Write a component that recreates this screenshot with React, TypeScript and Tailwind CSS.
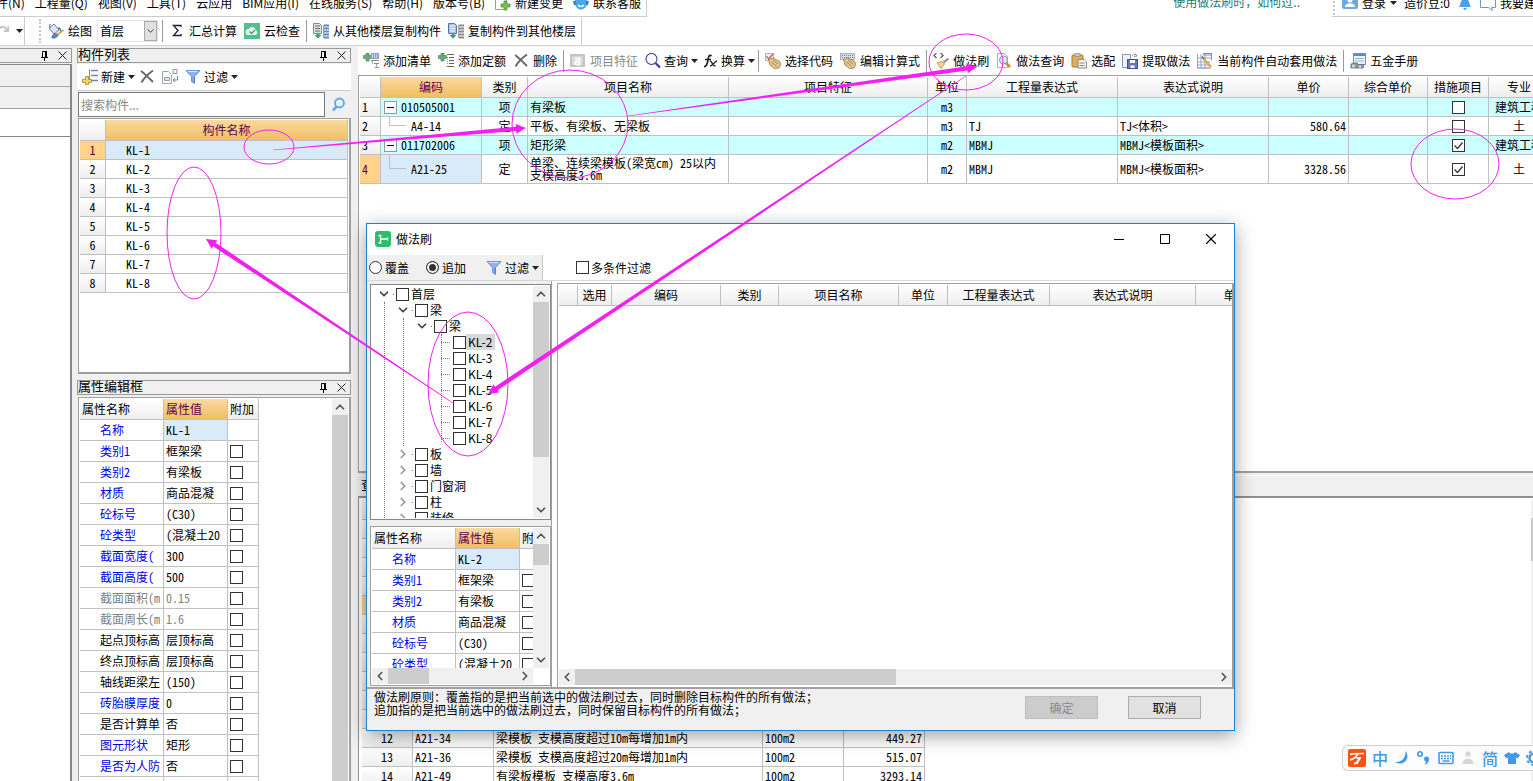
import { useState } from "react";
import type { ReactNode } from "react";
import { ChevronDown, ChevronLeft, ChevronRight, ChevronUp, X } from "lucide-react";
import clsx from "clsx";

const headBg = "bg-linear-to-b from-white to-[#eeeeee]";
const goldBg = "bg-linear-to-b from-[#fbd9a0] to-[#f0bf60] text-[#600050]";
const cell = "border-r border-b border-[#c0c0c0] p-0 font-normal overflow-hidden whitespace-nowrap";

/* ---------- icons ---------- */

function Svg({ children }: { children: ReactNode }) {
    return (
        <svg width="16" height="16" viewBox="0 0 16 16" fill="none" className="shrink-0" aria-hidden="true">
            {children}
        </svg>
    );
}

const AddListIcon = () => (
    <Svg>
        <path d="M3 0h3v2.500h2.500v3H6V8H3V5.500H.5v-3H3z" fill="#6fa67a" stroke="#3f7d51" strokeWidth=".6" />
        <rect x="8" y="0" width="8" height="6" fill="#8fa3c4" />
        <path d="M9 2h6M9 4h6" stroke="#fff" strokeDasharray="1 1" />
        <path d="M8 7.500h8M11 10.500h5M12 14.500h4" stroke="#8a8a8a" />
        <path d="M9.500 8v3M13.500 11v4" stroke="#aaa" />
    </Svg>
);

const AddQuotaIcon = () => (
    <Svg>
        <path d="M3 0h3v2.500h2.500v3H6V8H3V5.500H.5v-3H3z" fill="#6fa67a" stroke="#3f7d51" strokeWidth=".6" />
        <path d="M9 1.500h7M11 4.500h5M11 7.500h5M11 10.500h5M9 13.500h7" stroke="#666" />
        <path d="M9.500 4v7" stroke="#999" strokeDasharray="1 1" />
    </Svg>
);

const CrossIcon = () => (
    <Svg>
        <path d="M2 2c4 3 8 7 12 11M14 1.500C9 5 5 9 2.500 13.500" stroke="#666" strokeWidth="1.900" />
    </Svg>
);

const FeatureIcon = () => (
    <Svg>
        <rect x="0" y="1" width="15" height="13" fill="#c4c4c4" />
        <rect x="2" y="3" width="11" height="9" fill="#d8d8d8" />
        <path d="M5 5.500h4.500v6H6.500a1.500 1.500 0 010-3h3" stroke="#fff" strokeWidth="1.800" />
    </Svg>
);

const FindIcon = () => (
    <Svg>
        <circle cx="6.500" cy="6" r="5.500" stroke="#3a3f8f" strokeWidth="1.100" fill="#fafaff" />
        <path d="M10.500 10l4.500 4.500" stroke="#3a3f8f" strokeWidth="2.200" />
    </Svg>
);

const FxIcon = () => (
    <Svg>
        <path d="M9.500 3C7 1 6.500 4 6 7s-1.500 7-4 6.500M3 6.500h6" stroke="#222" strokeWidth="1.700" />
        <path d="M8 8c2.500 0 2 5 5.500 5M15 8c-2.500 0-4 5-7 5" stroke="#222" strokeWidth="1.400" />
    </Svg>
);

const Hand = () => (
    <g>
        <path d="M3.500 6.500l4-1.500 6.500 3 2 3-2 4-4.500.5L5 12z" fill="#e3c58c" stroke="#927345" strokeWidth=".8" />
        <path d="M8 7l5 4M6.500 9l5 4" stroke="#927345" strokeWidth=".7" />
    </g>
);

const PickCodeIcon = () => (
    <Svg>
        <rect x=".5" y=".5" width="8" height="7" fill="#f3f3f3" stroke="#b5b5b5" />
        <Hand />
        <path d="M1.500 3l2 3L8 1" stroke="#e05540" strokeWidth="1.300" />
    </Svg>
);

const EditExprIcon = () => (
    <Svg>
        <rect x=".5" y=".5" width="14" height="6" fill="#d8dce2" stroke="#8e98a6" strokeWidth=".7" />
        <path d="M2 2.500h12M2 4.500h12" stroke="#7c8694" strokeDasharray="1 1" />
        <Hand />
    </Svg>
);

const BrushIcon = () => (
    <Svg>
        <path d="M3.500 0L.8 2.500l2.700 2.500M7.500 0l2.700 2.500L7.500 5" stroke="#555" strokeWidth="1.100" />
        <path d="M15.500 5.500l-5 4" stroke="#8f8474" strokeWidth="1.800" />
        <path d="M4 9.500l5-1 2.500 2.500L8 15.500z" fill="#ecd79c" stroke="#ab8f53" strokeWidth=".8" />
    </Svg>
);

const QueryIcon = () => (
    <Svg>
        <path d="M1.500.5h7l3 3v11h-10z" fill="#fff" stroke="#a8b2c0" />
        <circle cx="7.500" cy="7" r="4" fill="#d9eaf7" stroke="#8a95a5" />
        <path d="M10 10l4 4" stroke="#d28a3c" strokeWidth="2.600" />
    </Svg>
);

const ClipboardIcon = () => (
    <Svg>
        <rect x="1" y="2" width="11" height="12" rx="1" fill="#e3ae55" stroke="#aa7927" />
        <rect x="4" y=".5" width="5" height="3" fill="#c9c9c9" stroke="#888" strokeWidth=".6" />
        <path d="M7 6.500h6l2.500 2.500v6H7z" fill="#f4f4f4" stroke="#888" />
        <path d="M8.500 10h5M8.500 12.500h5" stroke="#888" />
    </Svg>
);

const ExtractIcon = () => (
    <Svg>
        <path d="M.5 1.500h8v13h-8z" fill="#eef3fa" stroke="#8497b5" />
        <rect x="5.500" y="6.500" width="10" height="9" fill="#6c74b8" stroke="#474f93" />
        <path d="M8 7h5v3H8zM8.500 12.500h4V15h-4z" fill="#fff" />
        <path d="M10 3c1-2 4-2 5 0M13 .5l2 2.500-3 .5" stroke="#8a8a8a" />
    </Svg>
);

const AutoApplyIcon = () => (
    <Svg>
        <path d="M.5 1v14H12M.5 15H14M4 1v14M8 1v14M1 5h14M1 9h12M1 12h12" stroke="#97a0c6" />
        <path d="M6 .5h9M6 2h9M14.500 1v6" stroke="#7f8ac0" />
        <path d="M6 5l8 9" stroke="#dca94d" strokeWidth="2.600" />
        <path d="M5 3.500l2 2" stroke="#666" strokeWidth="1.500" />
    </Svg>
);

const ManualIcon = () => (
    <Svg>
        <rect x="3.500" y=".5" width="12" height="11" fill="#eef3fb" stroke="#6f8fc4" />
        <path d="M4 2h11" stroke="#5f88c9" strokeWidth="2" />
        <path d="M5 5.500h9M5 8h9" stroke="#9db3d8" />
        <path d="M1 11l3-1h3l2 2 3-1 2 2-1 2H1z" fill="#8e959e" stroke="#565e68" strokeWidth=".7" />
        <circle cx="3.500" cy="13" r="1.500" fill="#dfe3e8" />
        <circle cx="10" cy="13.500" r="1.200" fill="#dfe3e8" />
    </Svg>
);

const BucketIcon = () => (
    <Svg>
        <path d="M1 5l5-4 5 6-5 4z" fill="#dfe6f0" stroke="#66809f" />
        <path d="M3 2C1 .5.5 3 2.500 5" stroke="#66809f" />
        <path d="M10 5c2 0 3 1.500 2.500 4" stroke="#4a72b5" strokeWidth="1.500" />
        <path d="M15.500 7L9 12" stroke="#d6a84a" strokeWidth="1.800" />
        <path d="M4 13.500c1-3.500 5-3.500 6-1.500-1 3-4 3.500-6 3z" fill="#5d87c7" stroke="#3d62a0" strokeWidth=".7" />
    </Svg>
);

const CloudCheckIcon = () => (
    <Svg>
        <rect width="16" height="16" fill="#52c08a" />
        <path d="M4.500 12a3 3 0 01.3-6 3.600 3.600 0 016.800 1A2.600 2.600 0 0111.500 12z" fill="#e9f7ef" />
        <path d="M5.500 8.500l2 2 3.500-3.500" stroke="#3e9e70" strokeWidth="1.400" />
    </Svg>
);

const FloorCopyIcon = ({ flip }: { flip?: boolean }) => (
    <Svg>
        <path d={flip ? "M.5.500h6l2 2v8h-8z" : "M.5.500h6l2 2v8h-8z"} fill={flip ? "#a8c0e8" : "#e2e2e2"} stroke={flip ? "#4f73b5" : "#888"} />
        <path d="M2 3h5M2 5.500h5M2 8h5" stroke={flip ? "#fff" : "#666"} />
        <path d="M3.500 10h3v2h2L5 15.800 1.500 12h2z" fill="#3fa36a" />
        <path d="M11 2.500h5M10 5.500h6M10 8.500h6M10 11.500h6M11 14.500h5" stroke={flip ? "#8a8a8a" : "#5d87c7"} strokeWidth="1.800" />
        <path d="M10.500 2v13" stroke={flip ? "#aaa" : "#7fa2d6"} />
    </Svg>
);

const NewIcon = () => (
    <Svg>
        <path d="M7.500 0v11" stroke="#8a8f99" />
        <path d="M9 1.500h7M9 6.500h7M7 11.500h9" stroke="#6f88b5" strokeWidth="1.600" />
        <path d="M3.500 7.500h3v3h3v3h-3V16h-3v-2.500h-3v-3h3z" fill="#f5d36c" stroke="#a9812b" strokeWidth=".8" />
    </Svg>
);

const CopyDocIcon = () => (
    <Svg>
        <path d="M.5 2.500h6l3 3v9h-9z" fill="#fff" stroke="#9aa6bd" />
        <path d="M2.500 8.500h5v3h-5z" fill="#e4e4e4" stroke="#888" strokeWidth=".8" />
        <path d="M11 .5h4v4h-4z" stroke="#8b95a8" />
        <path d="M15.500 7v4H11M13 9l-2 2 2 2" stroke="#5f84d0" />
    </Svg>
);

const FunnelIcon = () => (
    <Svg>
        <path d="M1 1.500h14L9.500 7.500v7l-3-2v-5z" fill="#8fb2ee" stroke="#6a92da" />
        <path d="M3 2.500h9" stroke="#dbe7fb" />
        <path d="M9 8v5.500" stroke="#4a76c4" />
    </Svg>
);

const LensIcon = () => (
    <Svg>
        <circle cx="9.500" cy="6" r="4.500" fill="#e6f3fd" stroke="#58a8e6" strokeWidth="1.800" />
        <path d="M6.500 9.500L3 13.500" stroke="#58a8e6" strokeWidth="2.600" />
    </Svg>
);

const PinIcon = () => (
    <svg width="7" height="10" viewBox="0 0 7 10" fill="none" stroke="#000" aria-hidden="true">
        <path d="M1.500 6V.5h4M0 6.500h7M3.500 7v3" />
        <path d="M5 0v6" strokeWidth="2" />
    </svg>
);

const CloseIcon = () => (
    <svg width="9" height="9" viewBox="0 0 9 9" fill="none" stroke="#222" aria-hidden="true">
        <path d="M.5.5l8 8M8.500.5l-8 8" />
    </svg>
);

const Caret = () => (
    <svg width="7" height="4" viewBox="0 0 7 4" className="shrink-0" aria-hidden="true">
        <path d="M0 0h7L3.500 4z" fill="#222" />
    </svg>
);

/* ---------- small controls ---------- */

function Check({ label, checked = false }: { label: string; checked?: boolean }) {
    const [on, setOn] = useState(checked);
    return (
        <span className="relative inline-flex shrink-0 align-middle">
            <input
                type="checkbox"
                aria-label={label}
                checked={on}
                onChange={() => setOn(!on)}
                className="size-[13px] appearance-none border border-[#333] bg-white"
            />
            {on && (
                <svg width="13" height="13" viewBox="0 0 13 13" fill="none" className="pointer-events-none absolute inset-0">
                    <path d="M2.500 6.500l3 3 5-6" stroke="#333" strokeWidth="1.300" />
                </svg>
            )}
        </span>
    );
}

function ToolButton({ icon, text, menu, disabled }: { icon: ReactNode; text: string; menu?: boolean; disabled?: boolean }) {
    return (
        <button
            disabled={disabled}
            className={clsx("flex shrink-0 items-center pl-[3px] whitespace-nowrap", menu ? "gap-[3px] pr-0" : "gap-1 pr-[3px]", disabled && "text-[#8a8a8a]")}
        >
            {icon}
            {text}
            {menu && <Caret />}
        </button>
    );
}

const Divider = () => <span className="mx-0.5 h-[22px] w-px shrink-0 bg-[#999]" />;
const Grip = () => <span className="h-full w-0 shrink-0 border-l-2 border-dotted border-[#c4c4c4]" />;

function PanelTitle({ text }: { text: string }) {
    return (
        <div className="flex h-[15px] shrink-0 items-center border border-[#999] bg-[#f0f0f0] text-[13px] leading-[10px]">
            <h2 className="flex-1 self-start font-normal">{text}</h2>
            <button aria-label="固定" className="mr-[10px]"><PinIcon /></button>
            <button aria-label="关闭" className="mr-1"><CloseIcon /></button>
        </div>
    );
}

function ScrollV({ thumb, end = true }: { thumb: string; end?: boolean }) {
    return (
        <div className="flex w-[16px] shrink-0 flex-col items-center bg-[#f0f0f0]">
            <ChevronUp size={14} strokeWidth={3} color="#555" className="my-px shrink-0" />
            <div className="min-h-0 w-full flex-1">
                <div className={clsx("w-full bg-[#cdcdcd]", thumb)} />
            </div>
            {end && <ChevronDown size={14} strokeWidth={3} color="#555" className="my-px shrink-0" />}
        </div>
    );
}

function ScrollH({ thumb }: { thumb: string }) {
    return (
        <div className="flex h-[16px] shrink-0 items-center bg-[#f0f0f0]">
            <ChevronLeft size={14} strokeWidth={3} color="#555" className="mx-px shrink-0" />
            <div className="h-full min-w-0 flex-1">
                <div className={clsx("h-full bg-[#cdcdcd]", thumb)} />
            </div>
            <ChevronRight size={14} strokeWidth={3} color="#555" className="mx-px shrink-0" />
        </div>
    );
}

/* ---------- property grid ---------- */

type Prop = { name: string; value: string; tone?: "blue" | "gray" };

const baseProps: Prop[] = [
    { name: "类别1", value: "框架梁", tone: "blue" },
    { name: "类别2", value: "有梁板", tone: "blue" },
    { name: "材质", value: "商品混凝", tone: "blue" },
    { name: "砼标号", value: "(C30)", tone: "blue" },
    { name: "砼类型", value: "(混凝土20", tone: "blue" },
];

const moreProps: Prop[] = [
    { name: "截面宽度(", value: "300", tone: "blue" },
    { name: "截面高度(", value: "500", tone: "blue" },
    { name: "截面面积(m", value: "0.15", tone: "gray" },
    { name: "截面周长(m", value: "1.6", tone: "gray" },
    { name: "起点顶标高", value: "层顶标高" },
    { name: "终点顶标高", value: "层顶标高" },
    { name: "轴线距梁左", value: "(150)" },
    { name: "砖胎膜厚度", value: "0", tone: "blue" },
    { name: "是否计算单", value: "否" },
    { name: "图元形状", value: "矩形", tone: "blue" },
    { name: "是否为人防", value: "否", tone: "blue" },
];

function PropertyGrid({ name, rows }: { name: string; rows: Prop[] }) {
    return (
        <table className="w-[179px] shrink-0 table-fixed border-separate border-spacing-0 self-start text-left leading-[14px]">
            <colgroup>
                <col className="w-[84px]" />
                <col className="w-[64px]" />
                <col className="w-[31px]" />
            </colgroup>
            <thead>
                <tr className="h-[21px]">
                    <th className={clsx(cell, headBg, "pl-0.5")}>属性名称</th>
                    <th className={clsx(cell, goldBg, "pl-0.5")}>属性值</th>
                    <th className={clsx(cell, headBg, "pl-0.5")}>附加</th>
                </tr>
            </thead>
            <tbody>
                <tr className="h-[21px]">
                    <td className={clsx(cell, "pl-5 text-[#0000e6]")}>名称</td>
                    <td className={clsx(cell, "bg-[#d9eaf9] pl-0.5")}>{name}</td>
                    <td className={cell} />
                </tr>
                {rows.map((r) => (
                    <tr key={r.name} className="h-[21px]">
                        <td className={clsx(cell, "pl-5", r.tone === "blue" && "text-[#0000e6]", r.tone === "gray" && "text-[#808080]")}>{r.name}</td>
                        <td className={clsx(cell, "pl-0.5", r.tone === "gray" && "text-[#808080]")}>{r.value}</td>
                        <td className={clsx(cell, "pl-0.5 leading-none")}><Check label={r.name} /></td>
                    </tr>
                ))}
                <tr className="h-[21px]">
                    <td className={cell} />
                    <td className={cell} />
                    <td className={cell} />
                </tr>
            </tbody>
        </table>
    );
}

/* ---------- top bars ---------- */

const menus = ["文件(N)", "工程量(Q)", "视图(V)", "工具(T)", "云应用", "BIM应用(I)", "在线服务(S)", "帮助(H)", "版本号(B)"];

function MenuBar() {
    return (
        <div className="flex h-[17px] shrink-0 justify-between overflow-hidden">
            <nav className="-mt-[10px] -ml-4 flex h-[27px] items-center gap-[10px] border-r border-b border-[#ccc] pr-[5px] pb-px whitespace-nowrap">
                {menus.map((m) => (
                    <button key={m}>{m}</button>
                ))}
                <button className="flex items-center gap-1">
                    <Svg>
                        <path d="M2.500.5h9v14h-11v-12z" fill="#fff" stroke="#7ea3cf" />
                        <path d="M9 6h3v3h3v3h-3v3H9v-3H6V9h3z" fill="#7cbc54" stroke="#4c8a2c" strokeWidth=".7" />
                    </Svg>
                    新建变更
                </button>
                <button className="flex items-center gap-1">
                    <Svg>
                        <path d="M2 4h12v4c0 4-3 6.500-6 6.500S2 12 2 8z" fill="#4aa8e8" />
                        <path d="M0 6h3v4H1zM16 6h-3v4h2z" fill="#2d86c8" />
                        <path d="M5 10c1.500 2 4.500 2 6 0" stroke="#fff" strokeWidth="1.300" />
                    </Svg>
                    联系客服
                </button>
            </nav>
            <div className="-mt-[10px] flex h-[27px] gap-[32px]">
                <a href="#tip" className="self-center pb-1 whitespace-nowrap text-[#1a7a78]">使用做法刷时，如何过..</a>
                <div className="flex w-[201px] items-center gap-[7px] overflow-hidden border-b border-[#ccc] pb-px pl-px whitespace-nowrap">
                    <Grip />
                    <button className="flex items-center gap-1">
                        <Svg>
                            <rect y="0" width="16" height="14" rx="2" fill="#6eaadb" />
                            <circle cx="8" cy="5" r="2.500" fill="#fff" />
                            <path d="M3 12c0-5 10-5 10 0z" fill="#fff" />
                        </Svg>
                        登录
                        <Caret />
                    </button>
                    <span>造价豆:0</span>
                    <Svg>
                        <path d="M2 12c2-2 1-8 6-9 5 1 4 7 6 9zM6 13h4l-2 2.500z" fill="#4f9fe8" />
                    </Svg>
                    <button className="flex items-center gap-1">
                        <Svg>
                            <path d="M.5 2.500h15v10h-4l1 3-4-3h-8z" fill="#fff" stroke="#5b9fe0" />
                        </Svg>
                        我要建
                    </button>
                </div>
            </div>
        </div>
    );
}

function MainToolbar() {
    return (
        <div className="flex h-[29px] shrink-0 border-b border-[#d4d4d4]">
            <div className="flex w-[25px] shrink-0 items-center justify-between border-r border-[#ccc] pr-px">
                <svg width="9" height="14" viewBox="0 0 9 14" fill="none" aria-hidden="true">
                    <path d="M0 4c3-2 6-1 7 2M8.500 2v5H4" stroke="#c4c4c4" strokeWidth="2" />
                </svg>
                <Caret />
            </div>
            <div className="ml-[14px] flex items-center gap-px border-r border-[#ccc] py-0.5 pr-0.5">
                <Grip />
                <span className="w-0.5" />
                <ToolButton icon={<BucketIcon />} text="绘图" />
                <div className="relative mx-px flex h-[22px] w-[61px] border border-[#e4e4e4]">
                    <select aria-label="楼层" className="w-full appearance-none pl-[2px] leading-[18px]">
                        <option>首层</option>
                    </select>
                    <span className="pointer-events-none absolute inset-y-0 right-0 flex w-[13px] items-center justify-center border border-[#aaa] bg-[#e1e1e1]">
                        <ChevronDown size={12} color="#333" />
                    </span>
                </div>
                <Divider />
                <ToolButton
                    icon={
                        <Svg>
                            <path d="M12 4V2.500H4.500L9 7.500 4.500 12.500H12V11" stroke="#222" strokeWidth="1.300" />
                        </Svg>
                    }
                    text="汇总计算"
                />
                <ToolButton icon={<CloudCheckIcon />} text="云检查" />
                <Divider />
                <ToolButton icon={<FloorCopyIcon />} text="从其他楼层复制构件" />
                <ToolButton icon={<FloorCopyIcon flip />} text="复制构件到其他楼层" />
            </div>
        </div>
    );
}

/* ---------- left panels ---------- */

const components = ["KL-1", "KL-2", "KL-3", "KL-4", "KL-5", "KL-6", "KL-7", "KL-8"];

function ComponentList() {
    return (
        <section className="flex min-h-0 shrink grow-[326] basis-0 flex-col pt-0.5 pb-[6px]">
            <PanelTitle text="构件列表" />
            <div className="mt-px flex h-[27px] shrink-0 items-center gap-px border-b border-[#ccc] bg-white pl-[2px] font-['Noto_Sans_CJK_SC',sans-serif]">
                <ToolButton icon={<NewIcon />} text="新建" menu />
                <button aria-label="删除" className="px-[3px]"><CrossIcon /></button>
                <button aria-label="复制" className="px-[3px]"><CopyDocIcon /></button>
                <ToolButton icon={<FunnelIcon />} text="过滤" menu />
            </div>
            <div className="flex shrink-0 items-center pt-px pl-px">
                <input
                    type="text"
                    placeholder="搜索构件..."
                    aria-label="搜索构件"
                    className="h-[25px] min-w-0 flex-1 border border-[#7a7a7a] bg-white pl-0.5 font-['Noto_Sans_CJK_SC',sans-serif] placeholder:text-[#888]"
                />
                <button aria-label="搜索" className="px-[5px]"><LensIcon /></button>
            </div>
            <div className="mt-px ml-px min-h-0 flex-1 border-t border-r-2 border-b-2 border-l border-[#a0a0a0] bg-white p-px">
                <table className="w-full table-fixed border-separate border-spacing-0 text-left leading-[14px]">
                    <thead>
                        <tr className="h-[21px]">
                            <th className={clsx(cell, headBg, "w-[26px]")} />
                            <th className={clsx(cell, goldBg, "text-center")}>构件名称</th>
                        </tr>
                    </thead>
                    <tbody>
                        {components.map((c, i) => (
                            <tr key={c} className="h-[19px]">
                                <td className={clsx(cell, "text-center", i === 0 ? "bg-[#ffd48a] text-[#600050]" : headBg)}>{i + 1}</td>
                                <td className={clsx(cell, "pl-5", i === 0 && "bg-[#d9eaf9]")}>{c}</td>
                            </tr>
                        ))}
                    </tbody>
                </table>
            </div>
        </section>
    );
}

function PropertyEditor() {
    return (
        <section className="flex min-h-0 shrink grow-[401] basis-0 flex-col">
            <PanelTitle text="属性编辑框" />
            <div className="mt-0.5 ml-px flex min-h-0 flex-1 justify-between overflow-hidden border-t border-r-2 border-l border-[#a0a0a0] bg-white px-px pt-px">
                <PropertyGrid name="KL-1" rows={[...baseProps, ...moreProps]} />
                <ScrollV thumb="h-full" end={false} />
            </div>
        </section>
    );
}

/* ---------- main table ---------- */

type Item = {
    code: string; kind: string; title: ReactNode; unit: string; expr?: string; desc?: string;
    price?: string; measure: boolean; major: string;
};

const items: Item[] = [
    { code: "010505001", kind: "项", title: "有梁板", unit: "m3", measure: false, major: "建筑工程" },
    { code: "A4-14", kind: "定", title: "平板、有梁板、无梁板", unit: "m3", expr: "TJ", desc: "TJ<体积>", price: "580.64", measure: false, major: "土" },
    { code: "011702006", kind: "项", title: "矩形梁", unit: "m2", expr: "MBMJ", desc: "MBMJ<模板面积>", measure: true, major: "建筑工程" },
    { code: "A21-25", kind: "定", title: <>单梁、连续梁模板(梁宽cm) 25以内<br />支模高度3.6m</>, unit: "m2", expr: "MBMJ", desc: "MBMJ<模板面积>", price: "3328.56", measure: true, major: "土" },
];

function MethodToolbar() {
    return (
        <div className="mt-px flex h-7 shrink-0 items-center gap-px bg-white pl-[2px] font-['Noto_Sans_CJK_SC',sans-serif]">
            <ToolButton icon={<AddListIcon />} text="添加清单" />
            <ToolButton icon={<AddQuotaIcon />} text="添加定额" />
            <ToolButton icon={<CrossIcon />} text="删除" />
            <Divider />
            <ToolButton icon={<FeatureIcon />} text="项目特征" disabled />
            <ToolButton icon={<FindIcon />} text="查询" menu />
            <ToolButton icon={<FxIcon />} text="换算" menu />
            <Divider />
            <ToolButton icon={<PickCodeIcon />} text="选择代码" />
            <ToolButton icon={<EditExprIcon />} text="编辑计算式" />
            <Divider />
            <ToolButton icon={<BrushIcon />} text="做法刷" />
            <ToolButton icon={<QueryIcon />} text="做法查询" />
            <ToolButton icon={<ClipboardIcon />} text="选配" />
            <ToolButton icon={<ExtractIcon />} text="提取做法" />
            <ToolButton icon={<AutoApplyIcon />} text="当前构件自动套用做法" />
            <Divider />
            <ToolButton icon={<ManualIcon />} text="五金手册" />
        </div>
    );
}

function MethodTable() {
    return (
        <table className="w-[1190px] table-fixed border-separate border-spacing-0 leading-3">
            <colgroup>
                <col className="w-[21px]" />
                <col className="w-[101px]" />
                <col className="w-[46px]" />
                <col className="w-[201px]" />
                <col className="w-[199px]" />
                <col className="w-[39px]" />
                <col className="w-[151px]" />
                <col className="w-[151px]" />
                <col className="w-[80px]" />
                <col className="w-[79px]" />
                <col className="w-[61px]" />
                <col className="w-[61px]" />
            </colgroup>
            <thead>
                <tr className="h-[21px]">
                    <th className={clsx(cell, headBg)} />
                    <th className={clsx(cell, goldBg)}>编码</th>
                    {["类别", "项目名称", "项目特征", "单位", "工程量表达式", "表达式说明", "单价", "综合单价", "措施项目", "专业"].map((h) => (
                        <th key={h} className={clsx(cell, headBg)}>{h}</th>
                    ))}
                </tr>
            </thead>
            <tbody>
                {items.map((it, i) => {
                    const parent = it.kind === "项";
                    const last = i === items.length - 1;
                    return (
                        <tr key={it.code} className={clsx(last ? "h-[29px]" : "h-[19px]", parent && "bg-[#ccffff]")}>
                            <td className={clsx(cell, "pl-0.5", last ? "bg-[#ffd48a] text-[#600050]" : headBg)}>{i + 1}</td>
                            <td className={clsx(cell, last && "bg-[#d9eaf9]")}>
                                {parent ? (
                                    <span className="flex items-center gap-1 pl-[3px]">
                                        <button aria-label="折叠" className="flex size-[13px] items-center justify-center border border-[#999] bg-white">
                                            <span className="h-px w-[7px] bg-black" />
                                        </button>
                                        {it.code}
                                    </span>
                                ) : (
                                    <span className={clsx("flex items-center gap-[5px] pl-2", last ? "h-7" : "h-[18px]")}>
                                        <span className="h-1/2 w-[17px] self-start border-b border-l border-[#c0c0c0]" />
                                        {it.code}
                                    </span>
                                )}
                            </td>
                            <td className={clsx(cell, "text-center")}>{it.kind}</td>
                            <td className={clsx(cell, "pl-0.5")}>{it.title}</td>
                            <td className={cell} />
                            <td className={clsx(cell, "text-center")}>{it.unit}</td>
                            <td className={clsx(cell, "pl-0.5")}>{it.expr}</td>
                            <td className={clsx(cell, "pl-0.5")}>{it.desc}</td>
                            <td className={clsx(cell, "pr-0.5 text-right")}>{it.price}</td>
                            <td className={cell} />
                            <td className={clsx(cell, "text-center leading-none")}><Check label="措施项目" checked={it.measure} /></td>
                            <td className={clsx(cell, "text-center")}>{it.major}</td>
                        </tr>
                    );
                })}
            </tbody>
        </table>
    );
}

const quotas = [
    { no: 12, code: "A21-34", name: "梁模板 支模高度超过10m每增加1m内", price: "449.27" },
    { no: 13, code: "A21-36", name: "梁模板 支模高度超过20m每增加1m内", price: "515.07" },
    { no: 14, code: "A21-49", name: "有梁板模板 支模高度3.6m", price: "3293.14" },
];

function QuotaTable() {
    return (
        <table className="w-[563px] table-fixed border-separate border-spacing-0 leading-3">
            <colgroup>
                <col className="w-[51px]" />
                <col className="w-[81px]" />
                <col className="w-[269px]" />
                <col className="w-[81px]" />
                <col className="w-[81px]" />
            </colgroup>
            <tbody>
                <tr className="h-[21px]">
                    {[0, 1, 2, 3, 4].map((c) => <td key={c} className={clsx(cell, headBg)} />)}
                </tr>
                {Array.from({ length: 11 }, (_, r) => (
                    <tr key={r} className="h-[19px]">
                        <td className={clsx(cell, r === 4 ? "bg-[#ffd48a]" : headBg)} />
                        {[1, 2, 3, 4].map((c) => <td key={c} className={cell} />)}
                    </tr>
                ))}
                {quotas.map((q) => (
                    <tr key={q.no} className="h-[19px]">
                        <td className={clsx(cell, headBg, "text-center")}>{q.no}</td>
                        <td className={clsx(cell, "pl-0.5")}>{q.code}</td>
                        <td className={clsx(cell, "pl-0.5")}>{q.name}</td>
                        <td className={clsx(cell, "pl-0.5")}>100m2</td>
                        <td className={clsx(cell, "pr-0.5 text-right")}>{q.price}</td>
                    </tr>
                ))}
            </tbody>
        </table>
    );
}

/* ---------- dialog ---------- */

function TreeRow({ level, open, text, selected }: { level: 0 | 1 | 2 | 3; open?: boolean; text: string; selected?: boolean }) {
    const indent = ["pl-[5px]", "pl-6", "pl-[43px]", "pl-[62px]"][level];
    return (
        <label className={clsx("flex h-4 items-center whitespace-nowrap", indent)}>
            <span className="flex w-[19px] shrink-0 items-center">
                {level === 3 && <span className="mr-[3px] ml-auto w-[9px] border-t border-dotted border-[#888]" />}
                {level < 3 && (open
                    ? <ChevronDown size={14} strokeWidth={3} color="#444" />
                    : <ChevronRight size={14} strokeWidth={3} color="#999" />)}
                {level < 3 && <span className="ml-0.5 size-px bg-[#777]" />}
            </span>
            <Check label={text} />
            <span className={clsx("pr-[3px] pl-0.5 leading-4", selected && "bg-[#d9d9d9]")}>{text}</span>
        </label>
    );
}

function Tree() {
    return (
        <div className="relative min-w-0 flex-1 overflow-hidden font-['Noto_Sans_CJK_SC',sans-serif]">
            <span className="absolute top-4 bottom-0 left-3 border-l border-dotted border-[#777]" />
            <span className="absolute top-8 left-[31px] h-32 border-l border-dotted border-[#777]" />
            <span className="absolute top-12 left-[69px] h-[108px] border-l border-dotted border-[#777]" />
            <TreeRow level={0} open text="首层" />
            <TreeRow level={1} open text="梁" />
            <TreeRow level={2} open text="梁" />
            {components.slice(1).map((c, i) => (
                <TreeRow key={c} level={3} text={c} selected={i === 0} />
            ))}
            {["板", "墙", "门窗洞", "柱", "装修"].map((t) => (
                <TreeRow key={t} level={1} text={t} />
            ))}
        </div>
    );
}

function BrushDialog() {
    return (
        <div
            role="dialog"
            aria-label="做法刷"
            className="absolute top-[223px] left-[366px] flex h-[508px] w-[869px] flex-col border border-[#1883d7] bg-white font-['Noto_Sans_Mono_CJK_SC','Noto_Sans_CJK_SC',monospace] shadow-[0_5px_18px_rgba(0,0,0,0.38)]"
        >
            <div className="flex h-[31px] shrink-0 items-center pb-0.5 pl-2 font-['Noto_Sans_CJK_SC',sans-serif]">
                <svg width="16" height="16" viewBox="0 0 16 16" fill="none" aria-hidden="true">
                    <rect width="16" height="16" rx="3" fill="#2dbd6b" />
                    <path d="M3.500 4.500h3M5.500 4.500v7.500M3.500 12h3M6 8h7M12.500 6.500v3" stroke="#fff" strokeWidth="1.400" />
                </svg>
                <h2 className="ml-[5px] flex-1 font-normal">做法刷</h2>
                <button aria-label="最小化" className="flex w-[46px] justify-center">
                    <svg width="10" height="10" viewBox="0 0 10 10" aria-hidden="true"><path d="M0 5.500h10" stroke="#000" /></svg>
                </button>
                <button aria-label="最大化" className="flex w-[46px] justify-center">
                    <svg width="10" height="10" viewBox="0 0 10 10" fill="none" aria-hidden="true"><path d="M.5.5h9v9h-9z" stroke="#000" /></svg>
                </button>
                <button aria-label="关闭" className="flex w-[46px] justify-center"><X size={18} strokeWidth={1.5} /></button>
            </div>
            <div className="flex h-[26px] shrink-0 border-b border-[#d8d8d8] font-['Noto_Sans_CJK_SC',sans-serif]">
                <div className="flex w-[176px] items-center border-r border-[#c8c8c8] bg-[#f0f0f0] pl-0.5">
                    <label className="flex w-[57px] items-center gap-[3px]">
                        <input type="radio" name="mode" className="size-[13px] appearance-none rounded-full border border-[#333] bg-white checked:bg-[#333] checked:shadow-[inset_0_0_0_2px_#fff]" />
                        覆盖
                    </label>
                    <label className="flex w-[57px] items-center gap-[3px]">
                        <input type="radio" name="mode" defaultChecked className="size-[13px] appearance-none rounded-full border border-[#333] bg-white checked:bg-[#333] checked:shadow-[inset_0_0_0_2px_#fff]" />
                        追加
                    </label>
                    <ToolButton icon={<FunnelIcon />} text="过滤" menu />
                </div>
                <label className="ml-[33px] flex items-center gap-0.5">
                    <Check label="多条件过滤" />
                    多条件过滤
                </label>
            </div>
            <div className="flex min-h-0 flex-1">
                <div className="flex w-[185px] shrink-0 flex-col gap-[6px] border-r border-[#a0a0a0] bg-[#f0f0f0] pt-[3px] pb-px pl-[3px]">
                    <div className="flex min-h-0 shrink grow-[237] basis-0 border border-[#828790] bg-white p-px">
                        <Tree />
                        <ScrollV thumb="h-[155px]" />
                    </div>
                    <div className="flex min-h-0 shrink grow-[160] basis-0 flex-col border border-[#a0a0a0] bg-white p-px">
                        <div className="flex min-h-0 flex-1">
                            <div className="flex min-w-0 flex-1 overflow-hidden">
                                <PropertyGrid name="KL-2" rows={baseProps} />
                            </div>
                            <ScrollV thumb="h-[21px]" />
                        </div>
                        <div className="pr-4">
                            <ScrollH thumb="w-[41px]" />
                        </div>
                    </div>
                </div>
                <div className="mt-0.5 ml-[5px] flex min-w-0 flex-1 flex-col border-t border-r-2 border-l border-[#a0a0a0] pt-px pl-px">
                    <div className="min-h-0 flex-1 overflow-hidden">
                        <table className="w-[717px] table-fixed border-separate border-spacing-0 leading-3">
                            <colgroup>
                                <col className="w-[19px]" />
                                <col className="w-[34px]" />
                                <col className="w-[109px]" />
                                <col className="w-[58px]" />
                                <col className="w-[120px]" />
                                <col className="w-[49px]" />
                                <col className="w-[102px]" />
                                <col className="w-[146px]" />
                                <col className="w-[80px]" />
                            </colgroup>
                            <thead>
                                <tr className="h-[21px]">
                                    {["", "选用", "编码", "类别", "项目名称", "单位", "工程量表达式", "表达式说明", "单价"].map((h) => (
                                        <th key={h} className={clsx(cell, headBg)}>{h}</th>
                                    ))}
                                </tr>
                            </thead>
                        </table>
                    </div>
                    <ScrollH thumb="w-1/2" />
                    <span className="h-0.5" />
                </div>
            </div>
            <div className="flex h-[43px] shrink-0 items-center gap-[30px] border-t-2 border-[#a0a0a0] bg-[#f0f0f0] pr-[33px] pb-1 pl-[7px]">
                <p className="flex-1 self-start pt-px leading-[13px]">
                    做法刷原则：覆盖指的是把当前选中的做法刷过去，同时删除目标构件的所有做法；
                    <br />
                    追加指的是把当前选中的做法刷过去，同时保留目标构件的所有做法；
                </p>
                <button disabled className="h-[23px] w-[73px] border border-[#bfbfbf] bg-[#cccccc] text-[#888]">确定</button>
                <button className="h-[23px] w-[73px] border border-[#adadad] bg-[#e1e1e1]">取消</button>
            </div>
        </div>
    );
}

/* ---------- hand-drawn marks over the screen ---------- */

const ellipses = [
    [269, 147, 25, 17], [194, 233, 27, 66], [570, 124, 58, 54],
    [966, 62, 37, 28], [1455, 164, 44, 35], [468, 384, 40, 72],
];

const arrows = [
    [273, 150, 526, 128], [628, 116, 977, 67], [966, 76, 488, 394], [453, 403, 206, 239],
];

// tapered shaft that widens towards the head
function arrowPoints([x1, y1, x2, y2]: number[]) {
    const len = Math.hypot(x2 - x1, y2 - y1);
    const ux = (x2 - x1) / len;
    const uy = (y2 - y1) / len;
    const at = (d: number, w: number) => `${x1 + ux * d - uy * w},${y1 + uy * d + ux * w}`;
    const neck = len - 10;
    return [at(0, 0.3), at(neck, 2.2), at(neck, 5), at(len, 0), at(neck, -5), at(neck, -2.2), at(0, -0.3)].join(" ");
}

function Marks() {
    return (
        <svg className="pointer-events-none absolute inset-0 h-full w-full" aria-hidden="true">
            {ellipses.map(([cx, cy, rx, ry]) => (
                <ellipse key={cx} cx={cx} cy={cy} rx={rx} ry={ry} fill="none" stroke="#f31ff3" />
            ))}
            {arrows.map((a) => (
                <polygon key={a[0]} points={arrowPoints(a)} fill="#f31ff3" />
            ))}
        </svg>
    );
}

function ImeBar() {
    return (
        <div className="absolute right-0 bottom-[10px] flex h-[26px] w-[191px] items-center gap-[6px] overflow-hidden rounded-l-md border border-r-0 border-[#d0d0d0] bg-[#fcfcfc] pl-[5px] font-['Noto_Sans_CJK_SC',sans-serif] text-base leading-none font-medium text-[#4299e6]">
            <svg width="18" height="18" viewBox="0 0 18 18" fill="none" className="shrink-0" aria-hidden="true">
                <rect width="18" height="18" rx="2" fill="#ff5210" />
                <path d="M2 5.500c4-1 9-1 14-1M10 5c-2 3-4 5-8 6M8 9h5M12.500 8.500c-1.500 3-3 5-6.500 6.500M10.500 11l-1.500 4" stroke="#fff" strokeWidth="1.700" />
            </svg>
            <button>中</button>
            <Svg>
                <path d="M11.500 1c6 8-3 16-10.500 11C6 12.500 12 9 11.500 1z" fill="#4299e6" />
            </Svg>
            <Svg>
                <circle cx="4" cy="4" r="2.200" stroke="#4299e6" strokeWidth="1.600" />
                <path d="M8 9a2.500 2.500 0 015 0c0 3-1.500 5-4.500 5.500 1-1 1.500-2 1.500-3-1 0-2-1-2-2.500z" fill="#4299e6" />
            </Svg>
            <Svg>
                <rect x="1" y="2.500" width="14" height="11" rx="1" stroke="#4299e6" strokeWidth="1.600" />
                <path d="M3 6h10M3 8.500h10" stroke="#4299e6" strokeWidth="1.400" strokeDasharray="2 1" />
                <path d="M4.500 11h7" stroke="#4299e6" strokeWidth="1.400" />
            </Svg>
            <Svg>
                <circle cx="8" cy="4" r="2.700" fill="#d6d6d6" />
                <path d="M2.500 14c0-7 11-7 11 0z" fill="#d6d6d6" />
            </Svg>
            <button>简</button>
            <Svg>
                <path d="M5 2c1 2 5 2 6 0l5 3-2 3.500-2-1V14H4V7.500l-2 1L0 5z" fill="#4299e6" />
            </Svg>
            <Svg>
                <circle cx="8" cy="8" r="4.500" stroke="#4299e6" strokeWidth="2.400" />
                <circle cx="8" cy="8" r="7" stroke="#4299e6" strokeWidth="2" strokeDasharray="2.700 2.800" />
            </Svg>
        </div>
    );
}

export default function App() {
    return (
        <div className="relative flex h-screen flex-col overflow-hidden bg-white font-['Noto_Sans_CJK_SC',sans-serif] text-xs text-black">
            <MenuBar />
            <MainToolbar />
            <main className="flex min-h-0 flex-1 bg-[#f0f0f0] font-['Noto_Sans_Mono_CJK_SC','Noto_Sans_CJK_SC',monospace]">
                <aside className="flex w-[72px] shrink-0 flex-col pt-0.5">
                    <div className="-ml-px flex h-[15px] shrink-0 items-center justify-end border border-[#999]">
                        <button aria-label="固定" className="mr-[10px]"><PinIcon /></button>
                        <button aria-label="关闭" className="mr-1"><CloseIcon /></button>
                    </div>
                    <div className="mt-px flex flex-1 flex-col border-t border-r-2 border-[#828790] bg-white">
                        <div className="h-[22px] border-b border-[#a8a8a8] bg-[#f0f0f0]" />
                        <div className="h-[22px] border-b border-[#a0a0a0] bg-[#f0f0f0]" />
                        <div className="h-7 border-b border-[#828790]" />
                    </div>
                </aside>
                <div className="ml-[5px] flex w-[274px] shrink-0 flex-col">
                    <ComponentList />
                    <PropertyEditor />
                </div>
                <div className="ml-[7px] flex min-w-0 flex-1 flex-col">
                    <section className="flex min-h-0 shrink grow-[426] basis-0 flex-col border-b-2 border-[#a0a0a0]">
                        <MethodToolbar />
                        <div className="min-h-0 flex-1 overflow-hidden border-t border-l border-[#a0a0a0] bg-white pt-px pl-px">
                            <MethodTable />
                        </div>
                    </section>
                    <section className="flex min-h-0 shrink grow-[309] basis-0 flex-col">
                        <h2 className="mt-0.5 shrink-0 border-t border-white pb-1 pl-[3px] text-[13px] leading-4 font-normal">查</h2>
                        <div className="flex min-h-0 flex-1 justify-between overflow-hidden border-t-2 border-l border-[#909090] bg-white pt-px pl-[3px]">
                            <QuotaTable />
                            <div className="w-0.5 bg-[#f0f0f0] pt-[19px]">
                                <div className="h-[43px] bg-[#c8c8c8]" />
                            </div>
                        </div>
                    </section>
                </div>
            </main>
            <BrushDialog />
            <ImeBar />
            <Marks />
        </div>
    );
}
